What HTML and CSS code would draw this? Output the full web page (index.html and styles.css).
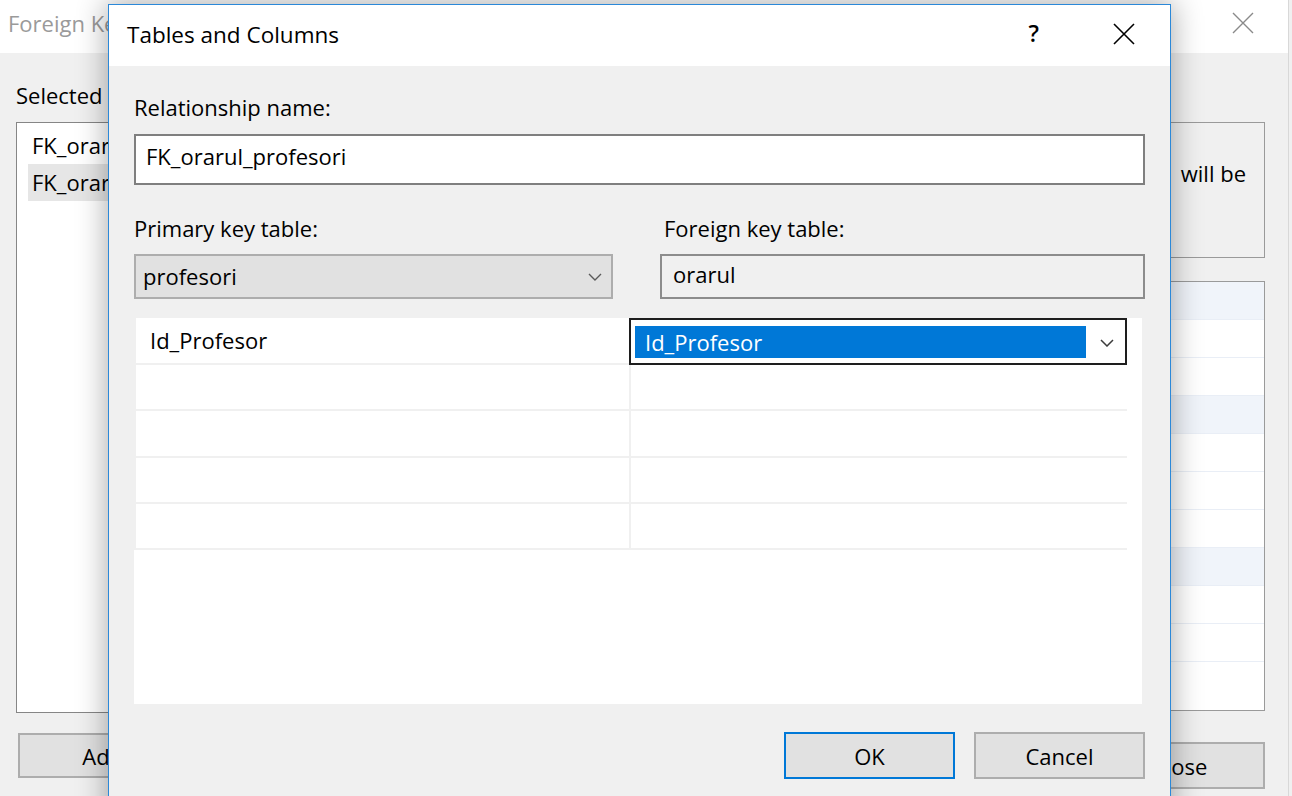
FILE: index.html
```html
<!DOCTYPE html>
<html>
<head>
<meta charset="utf-8">
<title>Tables and Columns</title>
<link rel="stylesheet" href="styles.css">
</head>
<body>
<div class="desktop">
  <div class="bg-window">
    <div class="bg-titlebar">
      <span class="bg-title">Foreign Key Relationships</span>
      <svg class="bg-close" width="22" height="22" viewBox="0 0 22 22"><path d="M1 1 L21 21 M21 1 L1 21" stroke="#8a8a8a" stroke-width="1.4" fill="none"/></svg>
    </div>
    <div class="bg-body">
      <div class="bg-left">
        <div class="bg-label">Selected Relationship:</div>
        <div class="bg-list">
          <div class="bg-item">FK_orarul_discipline</div>
          <div class="bg-item bg-item-sel">FK_orarul_profesori</div>
        </div>
        <div class="bg-btns">
          <button class="btn">Add</button>
          <button class="btn">Delete</button>
        </div>
      </div>
      <div class="bg-right">
        <div class="bg-desc">
          <div class="bg-desc-line">the new relationship <span class="bg-desc-tail">will be</span></div>
        </div>
        <div class="bg-grid">
          <div class="bg-row bg-cat"></div>
          <div class="bg-row"></div>
          <div class="bg-row"></div>
          <div class="bg-row bg-cat"></div>
          <div class="bg-row"></div>
          <div class="bg-row"></div>
          <div class="bg-row"></div>
          <div class="bg-row bg-cat"></div>
          <div class="bg-row"></div>
          <div class="bg-row"></div>
          <div class="bg-row bg-last"></div>
        </div>
        <div class="bg-right-btns">
          <button class="btn">Close</button>
        </div>
      </div>
    </div>
  </div>

  <div class="dialog">
    <div class="dlg-titlebar">
      <span class="dlg-title">Tables and Columns</span>
      <span class="dlg-help">?</span>
      <svg class="dlg-close" width="22" height="22" viewBox="0 0 22 22"><path d="M1 1 L21 21 M21 1 L1 21" stroke="#000" stroke-width="1.6" fill="none"/></svg>
    </div>
    <div class="dlg-body">
      <div class="field-label">Relationship name:</div>
      <div class="textbox">FK_orarul_profesori</div>

      <div class="tables-row">
        <div class="col">
          <div class="field-label">Primary key table:</div>
          <div class="combo">
            <span>profesori</span>
            <svg class="chev" width="14" height="8" viewBox="0 0 14 8"><polyline points="1,1 7,7 13,1" fill="none" stroke="#5a5a5a" stroke-width="1.4"/></svg>
          </div>
        </div>
        <div class="col">
          <div class="field-label field-label-fk">Foreign key table:</div>
          <div class="readonly">orarul</div>
        </div>
      </div>

      <div class="columns-grid">
        <div class="grid-row grid-row-tall">
          <div class="cell cell-left">Id_Profesor</div>
          <div class="cell cell-edit">
            <div class="edit-sel">Id_Profesor</div>
            <svg class="chev" width="14" height="8" viewBox="0 0 14 8"><polyline points="1,1 7,7 13,1" fill="none" stroke="#3c3c3c" stroke-width="1.5"/></svg>
          </div>
        </div>
        <div class="grid-row"><div class="cell cell-left"></div><div class="cell"></div></div>
        <div class="grid-row grid-row-tall"><div class="cell cell-left"></div><div class="cell"></div></div>
        <div class="grid-row"><div class="cell cell-left"></div><div class="cell"></div></div>
        <div class="grid-row"><div class="cell cell-left"></div><div class="cell"></div></div>
      </div>

      <div class="dlg-buttons">
        <button class="btn btn-default">OK</button>
        <button class="btn">Cancel</button>
      </div>
    </div>
  </div>
</div>
</body>
</html>
```

FILE: styles.css
```css
* { box-sizing: border-box; }

html, body {
  margin: 0;
  padding: 0;
}

body {
  background: #f0f0f0;
  font-family: "Open Sans", "Noto Sans", sans-serif;
  font-size: 22px;
  color: #000;
  overflow: hidden;
}

.desktop {
  position: relative;
  width: 1292px;
  height: 796px;
  overflow: hidden;
}

/* ---------- background window ---------- */
.bg-window {
  width: 1289px;
  height: 796px;
  background: #f0f0f0;
  border-right: 1px solid #d8d8d8;
  display: flex;
  flex-direction: column;
}

.bg-titlebar {
  height: 53px;
  background: #fff;
  display: flex;
  align-items: flex-start;
  justify-content: space-between;
  padding: 0 34px 0 8px;
  flex-shrink: 0;
}

.bg-title {
  color: #9a9a9a;
  line-height: 27px;
  margin-top: 10px;
  white-space: nowrap;
}

.bg-close {
  margin-top: 12px;
}

.bg-body {
  flex: 1;
  display: flex;
  justify-content: space-between;
  padding: 29px 23px 0 16px;
}

.bg-left {
  width: 360px;
  display: flex;
  flex-direction: column;
}

.bg-label {
  line-height: 27px;
  height: 27px;
  margin-bottom: 13px;
  white-space: nowrap;
}

.bg-list {
  height: 591px;
  border: 1px solid #868686;
  background: #fff;
  padding: 4px 0 0 11px;
}

.bg-item {
  height: 37px;
  line-height: 37px;
  padding-left: 4px;
  white-space: nowrap;
}

.bg-item-sel {
  background: #e6e6e6;
}

.bg-btns {
  margin-top: 20px;
  margin-left: 2px;
  display: flex;
  gap: 19px;
}

.bg-btns .btn {
  height: 45px;
}

.bg-right {
  width: 600px;
  display: flex;
  flex-direction: column;
  padding-top: 40px;
}

.bg-desc {
  height: 136px;
  border: 1px solid #9a9a9a;
  background: #f0f0f0;
  padding: 37px 18px 0 10px;
}

.bg-desc-line {
  white-space: nowrap;
  line-height: 27px;
  text-align: right;
}

.bg-desc-tail {
  margin-left: 14px;
}

.bg-grid {
  margin-top: 23px;
  height: 430px;
  border: 1px solid #9a9a9a;
  background: #fff;
  display: flex;
  flex-direction: column;
}

.bg-row {
  height: 38px;
  border-bottom: 1px solid #e9eef6;
  flex-shrink: 0;
}

.bg-cat {
  background: #f0f4fa;
}

.bg-last {
  flex: 1;
  border-bottom: 0;
}

.bg-right-btns {
  margin-top: 31px;
  display: flex;
  justify-content: flex-end;
}

/* ---------- buttons ---------- */
.btn {
  width: 171px;
  height: 47px;
  background: #e1e1e1;
  border: 2px solid #adadad;
  font-family: "Open Sans", "Noto Sans", sans-serif;
  font-size: 22px;
  color: #000;
  padding: 0;
  margin: 0;
}

.btn-default {
  border-color: #0078d7;
}

/* ---------- front dialog ---------- */
.dialog {
  position: absolute;
  left: 108px;
  top: 4px;
  width: 1063px;
  height: 820px;
  border: 1px solid #2b88d8;
  background: #f0f0f0;
  box-shadow: 0 0 28px 2px rgba(0, 0, 0, 0.32);
  display: flex;
  flex-direction: column;
}

.dlg-titlebar {
  height: 61px;
  background: #fff;
  display: flex;
  align-items: center;
  padding: 0 35px 0 18px;
  flex-shrink: 0;
}

.dlg-title {
  flex: 1;
  font-size: 22.5px;
  line-height: 27px;
  margin-top: -2px;
}

.dlg-help {
  font-size: 23px;
  font-weight: 600;
  line-height: 27px;
  margin-right: 74px;
  margin-top: -4px;
}

.dlg-close {
  margin-top: -3px;
}

.dlg-body {
  padding: 28px 25px 0 25px;
}

.field-label {
  height: 27px;
  line-height: 27px;
  white-space: nowrap;
}

.field-label-fk {
  padding-left: 4px;
}

.textbox {
  margin-top: 13px;
  height: 51px;
  border: 2px solid #7f7f7f;
  background: #fff;
  padding: 7px 10px 0 10px;
  line-height: 27px;
}

.tables-row {
  display: grid;
  grid-template-columns: 479px 1fr;
  column-gap: 47px;
  margin-top: 30px;
}

.combo {
  margin-top: 12px;
  height: 45px;
  border: 2px solid #adadad;
  background: #e1e1e1;
  display: flex;
  align-items: center;
  justify-content: space-between;
  padding: 0 9px 0 7px;
  line-height: 27px;
}

.readonly {
  margin-top: 12px;
  height: 45px;
  border: 2px solid #8c8c8c;
  background: #f0f0f0;
  padding: 5px 11px 0 11px;
  line-height: 27px;
}

.columns-grid {
  margin-top: 19px;
  width: 1008px;
  height: 386px;
  background: #fff;
}

.grid-row {
  width: 993px;
  height: 46px;
  display: flex;
  border-bottom: 2px solid #f0f0f0;
  border-left: 2px solid #f0f0f0;
}

.grid-row-tall {
  height: 47px;
}

.cell {
  flex: 1;
  line-height: 44px;
  white-space: nowrap;
}

.cell-left {
  flex: 0 0 495px;
  border-right: 2px solid #f0f0f0;
  padding-left: 14px;
}

.cell-edit {
  position: relative;
  margin: 0 0 -2px -2px;
  height: 47px;
  border: 2px solid #1e1e1e;
  display: flex;
  align-items: center;
  padding: 0 0 0 4px;
}

.edit-sel {
  width: 451px;
  height: 32px;
  line-height: 32px;
  background: #0078d7;
  color: #fff;
  padding-left: 10px;
  margin-top: 1px;
}

.cell-edit .chev {
  margin-left: 14px;
  margin-top: 2px;
}

.dlg-buttons {
  margin-top: 28px;
  display: flex;
  justify-content: flex-end;
  gap: 19px;
}
```
